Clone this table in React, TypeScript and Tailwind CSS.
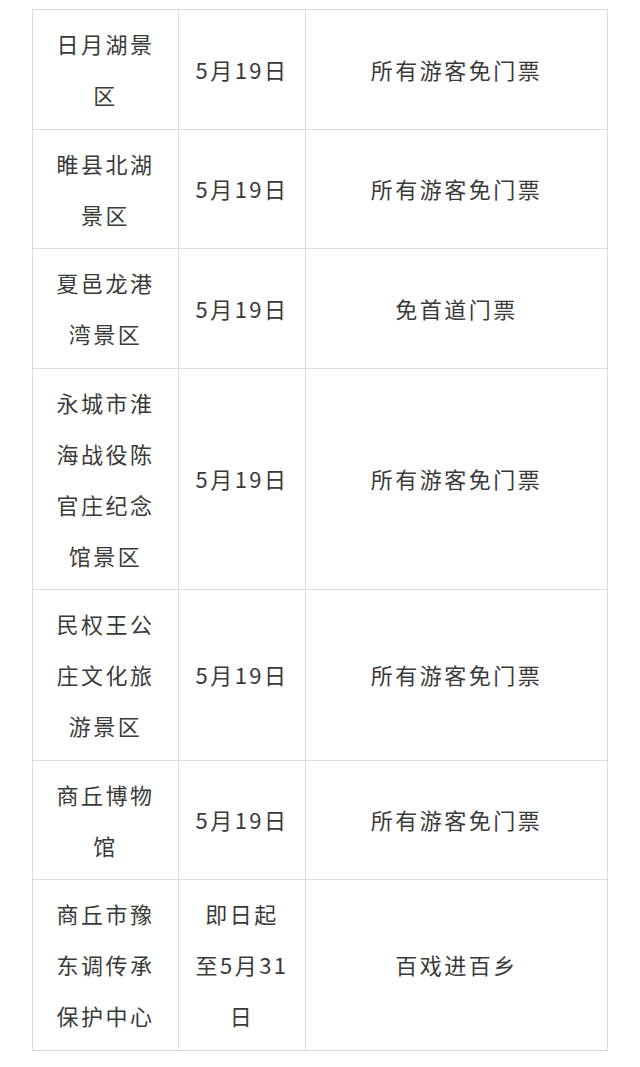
const rows: [string, string, string][] = [
  ["日月湖景区", "5月19日", "所有游客免门票"],
  ["睢县北湖景区", "5月19日", "所有游客免门票"],
  ["夏邑龙港湾景区", "5月19日", "免首道门票"],
  ["永城市淮海战役陈官庄纪念馆景区", "5月19日", "所有游客免门票"],
  ["民权王公庄文化旅游景区", "5月19日", "所有游客免门票"],
  ["商丘博物馆", "5月19日", "所有游客免门票"],
  ["商丘市豫东调传承保护中心", "即日起至5月31日", "百戏进百乡"],
];

export default function App() {
  return (
    <div className="min-h-[1067px] bg-white pt-[9px] pl-[32px]">
      <table
        className="table-fixed border-collapse text-center text-[22px] leading-[51px] tracking-[2.5px] text-[#3a3a3a]"
        style={{ fontFamily: '"Noto Sans CJK SC", "Noto Sans", sans-serif' }}
      >
        <colgroup>
          <col className="w-[146px]" />
          <col className="w-[127px]" />
          <col className="w-[302px]" />
        </colgroup>
        <tbody>
          {rows.map(([name, date, offer]) => (
            <tr key={name}>
              <td className="border border-[#dcdcdc] px-[12px] py-[8.25px]">{name}</td>
              <td className="border border-[#dcdcdc] px-[15px] py-[8.25px]">{date}</td>
              <td className="border border-[#dcdcdc] px-[12px] py-[8.25px]">{offer}</td>
            </tr>
          ))}
        </tbody>
      </table>
    </div>
  );
}
